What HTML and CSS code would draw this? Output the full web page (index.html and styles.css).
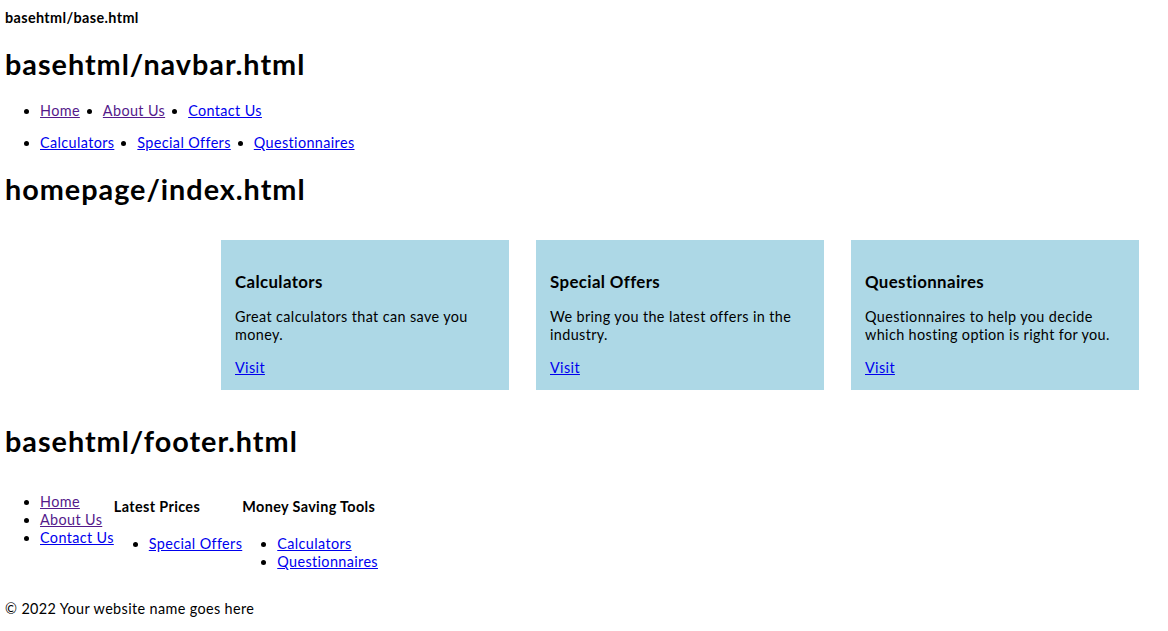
FILE: index.html
```html
<!DOCTYPE html>
<html lang="en">
<head>
<meta charset="utf-8">
<title>Home</title>
<link rel="stylesheet" href="styles.css">
</head>
<body>
<div class="template-label">basehtml/base.html</div>
<h1 class="template-title">basehtml/navbar.html</h1>
<nav class="navbar">
  <ul class="nav-row">
    <li><a class="visited" href="#">Home</a></li>
    <li><a class="visited" href="#">About Us</a></li>
    <li><a href="#">Contact Us</a></li>
  </ul>
  <ul class="nav-row">
    <li><a href="#">Calculators</a></li>
    <li><a href="#">Special Offers</a></li>
    <li><a href="#">Questionnaires</a></li>
  </ul>
</nav>
<h1 class="template-title">homepage/index.html</h1>
<section class="cards">
  <div class="card">
    <h3 class="card-title">Calculators</h3>
    <p class="card-text">Great calculators that can save you money.</p>
    <a href="#">Visit</a>
  </div>
  <div class="card">
    <h3 class="card-title">Special Offers</h3>
    <p class="card-text">We bring you the latest offers in the industry.</p>
    <a href="#">Visit</a>
  </div>
  <div class="card">
    <h3 class="card-title">Questionnaires</h3>
    <p class="card-text">Questionnaires to help you decide which hosting option is right for you.</p>
    <a href="#">Visit</a>
  </div>
</section>
<h1 class="template-title">basehtml/footer.html</h1>
<footer class="footer">
  <div class="footer-cols">
    <ul class="footer-list">
      <li><a class="visited" href="#">Home</a></li>
      <li><a class="visited" href="#">About Us</a></li>
      <li><a href="#">Contact Us</a></li>
    </ul>
    <div class="footer-col">
      <h4 class="footer-heading">Latest Prices</h4>
      <ul class="footer-list">
        <li><a href="#">Special Offers</a></li>
      </ul>
    </div>
    <div class="footer-col">
      <h4 class="footer-heading">Money Saving Tools</h4>
      <ul class="footer-list">
        <li><a href="#">Calculators</a></li>
        <li><a href="#">Questionnaires</a></li>
      </ul>
    </div>
  </div>
  <p class="copyright">© 2022 Your website name goes here</p>
</footer>
</body>
</html>
```
FILE: styles.css
```css
html, body {
  background: #ffffff;
}
body {
  margin: 0;
  padding: 9px 5px 0;
  font-family: Lato, "Noto Sans", sans-serif;
  font-size: 14.4px;
  line-height: 18px;
  letter-spacing: 0.026em;
  color: #000000;
}
a {
  color: #0000ee;
}
a.visited {
  color: #551a8b;
}
.template-label {
  font-weight: bold;
}
.template-title {
  font-size: 28.8px;
  line-height: 36px;
  font-weight: bold;
  letter-spacing: 0.034em;
  margin: 19.3px 0;
}
.nav-row {
  display: flex;
  gap: 23px;
  margin: 14.4px 0;
  padding-left: 35px;
}
.cards {
  display: flex;
  justify-content: flex-end;
  gap: 27px;
  padding-right: 24px;
  margin: 33px 0 33px;
}
.card {
  box-sizing: border-box;
  width: 288px;
  padding: 13.4px 14px;
  background: #add8e6;
}
.card-title {
  font-size: 16.85px;
  line-height: 21px;
  margin: 16.85px 0;
}
.card-text {
  margin: 14.4px 0;
}
.footer-cols {
  display: flex;
  align-items: flex-start;
}
.footer-list {
  margin: 14.4px 0;
  padding-left: 35px;
}
.footer-heading {
  font-size: 14.4px;
  line-height: 18px;
  margin: 19.2px 0 19.7px;
}
.copyright {
  margin: 14.4px 0;
}
```
